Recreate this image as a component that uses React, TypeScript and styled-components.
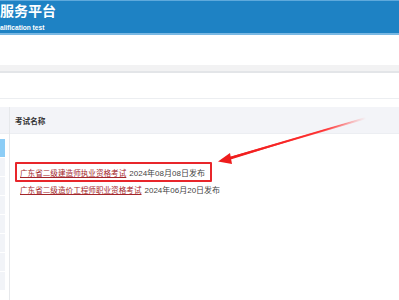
import styled, { createGlobalStyle } from "styled-components";

const GlobalStyle = createGlobalStyle`
  html, body {
    margin: 0;
    padding: 0;
    background: #ffffff;
    overflow: hidden;
  }
  body {
    font-family: "Liberation Sans", "Noto Sans CJK SC", Arial, sans-serif;
  }
`

const Page = styled.div`
  width: 399px;
  height: 300px;
  position: relative;
  overflow: hidden;
  display: flex;
  flex-direction: column;
`

const Header = styled.div`
  height: 31px;
  background: #1e82c4;
  border-top: 1px solid #5ea9dc;
  border-bottom: 2px solid #7ab8e3;
  display: flex;
  flex-direction: column;
  padding-top: 1px;
`

const Title = styled.div`
  color: #ffffff;
  font-size: 14px;
  font-weight: 700;
  line-height: 18px;
  white-space: nowrap;
`

const SubTitle = styled.div`
  margin-top: 3px;
  color: #ffffff;
  font-size: 6.6px;
  font-weight: 700;
  line-height: 9px;
  white-space: nowrap;
`

const Spacer = styled.div<{ h: number }>`
  height: ${props => props.h}px;
  flex-shrink: 0;
`

const GrayBar = styled.div`
  height: 6px;
  background: #f2f2f3;
  border-bottom: 2px solid #e3e5e8;
`

const Toolbar = styled.div`
  height: 25px;
  border-bottom: 1px solid #eceef1;
`

const Body = styled.div`
  flex: 1;
  display: flex;
`

const Side = styled.div`
  width: 9px;
  border-right: 1px solid #e6e8eb;
  display: flex;
  flex-direction: column;
  flex-shrink: 0;
`

const SideHead = styled.div`
  height: 26px;
  background: #f3f4f8;
  border-bottom: 1px solid #eceef2;
`

const Menu = styled.div`
  margin-top: 5px;
  width: 5px;
  display: flex;
  flex-direction: column;
  gap: 1px;
`

const MenuItem = styled.div<{ active?: boolean }>`
  height: 18px;
  background: ${props => (props.active ? "#8ccdf6" : "#f2f4f8")};
`

const Main = styled.div`
  flex: 1;
  display: flex;
  flex-direction: column;
`

const HeadRow = styled.div`
  height: 26px;
  background: #f3f4f8;
  border-bottom: 1px solid #eceef2;
  display: flex;
  align-items: center;
  padding-left: 5px;
  color: #333333;
  font-size: 7.6px;
  font-weight: 700;
`

const List = styled.div`
  padding-top: 28px;
  padding-left: 5px;
  display: flex;
  flex-direction: column;
  align-items: flex-start;
`

const Row = styled.div<{ boxed?: boolean }>`
  height: ${props => (props.boxed ? "16px" : "14px")};
  display: flex;
  align-items: center;
  padding: ${props => (props.boxed ? "0 5px 0 3px" : "0 0 0 5px")};
  border: ${props => (props.boxed ? "2px solid #e8262b" : "none")};
  border-radius: 1px;
  font-size: 7.6px;
  white-space: nowrap;
`

const Link = styled.a`
  color: #a3262a;
  text-decoration: underline;
  margin-right: 3px;
`

const Date = styled.span`
  color: #444444;
  font-size: 8px;
`

const Arrow = styled.svg`
  position: absolute;
  left: 0;
  top: 0;
  pointer-events: none;
`

const rows = [
  { name: "广东省二级建造师执业资格考试", date: "2024年08月08日发布", boxed: true },
  { name: "广东省二级造价工程师职业资格考试", date: "2024年06月20日发布", boxed: false },
]

const App = () => {
  return (
    <Page>
      <GlobalStyle />
      <Header>
        <Title>服务平台</Title>
        <SubTitle>alification test</SubTitle>
      </Header>
      <Spacer h={30} />
      <GrayBar />
      <Toolbar />
      <Spacer h={8} />
      <Body>
        <Side>
          <SideHead />
          <Menu>
            <MenuItem active />
            {Array.from({ length: 7 }).map((_, i) => (
              <MenuItem key={i} />
            ))}
          </Menu>
        </Side>
        <Main>
          <HeadRow>考试名称</HeadRow>
          <List>
            {rows.map(r => (
              <Row key={r.name} boxed={r.boxed}>
                <Link>{r.name}</Link>
                <Date>{r.date}</Date>
              </Row>
            ))}
          </List>
        </Main>
      </Body>
      <Arrow width="399" height="300" viewBox="0 0 399 300">
        <defs>
          <linearGradient id="fade" x1="366" y1="118" x2="226" y2="158" gradientUnits="userSpaceOnUse">
            <stop offset="0" stopColor="#ff3b3b" stopOpacity="0" />
            <stop offset="0.3" stopColor="#ff2a2a" stopOpacity="0.85" />
            <stop offset="1" stopColor="#ee1c1c" stopOpacity="1" />
          </linearGradient>
        </defs>
        <path d="M366 117.5 L228 157.5 L229 160 Z" fill="url(#fade)" />
        <line x1="366" y1="118" x2="228" y2="158.5" stroke="url(#fade)" strokeWidth="2" strokeLinecap="round" />
        <polygon points="218,161.5 230,153 232,164" fill="#ee1c1c" />
      </Arrow>
    </Page>
  )
}

export default App
